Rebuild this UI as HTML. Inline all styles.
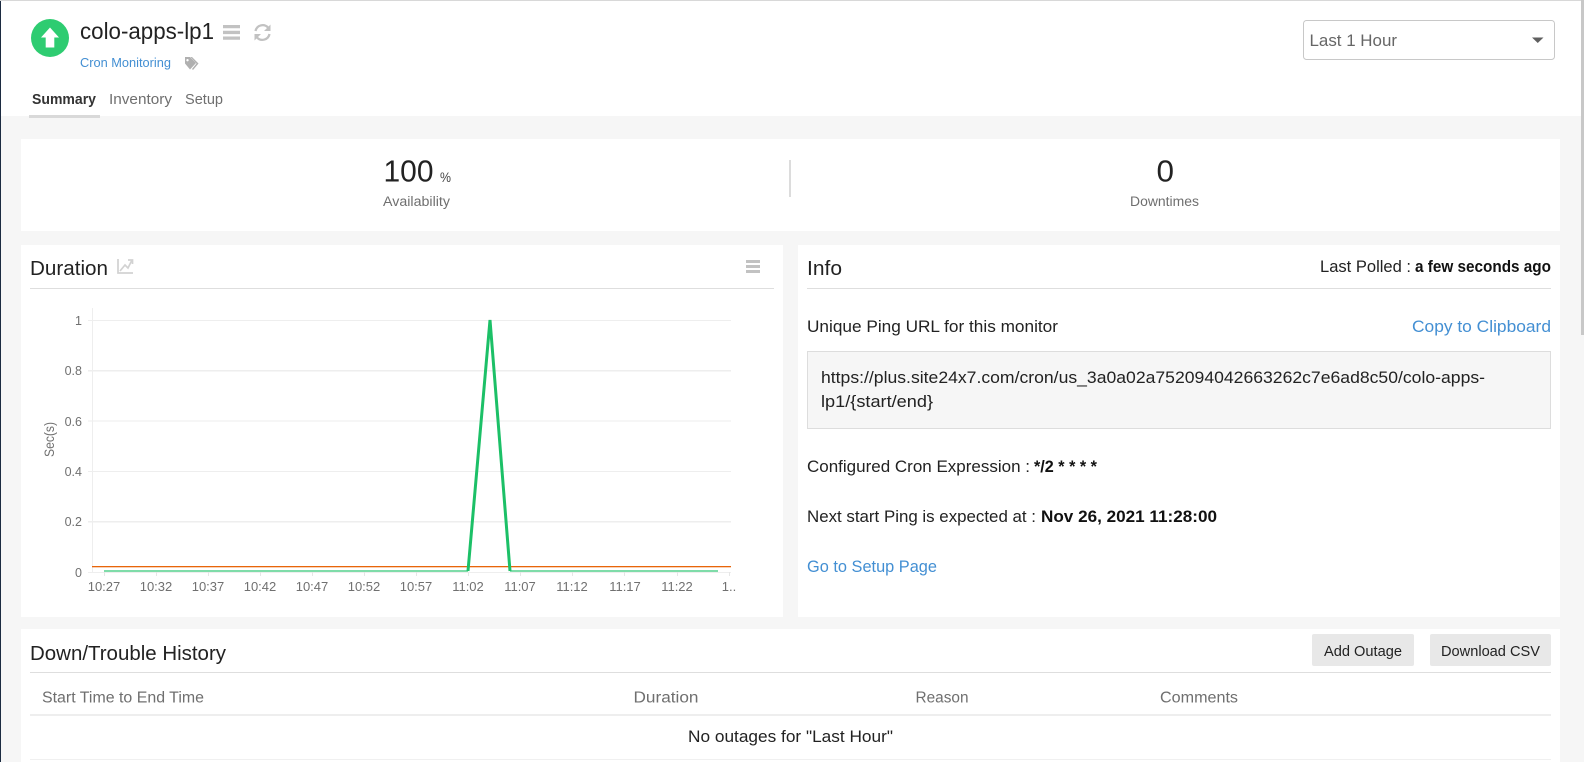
<!DOCTYPE html>
<html lang="en">
<head>
<meta charset="utf-8">
<title>colo-apps-lp1</title>
<style>
html,body{margin:0;padding:0;width:1584px;height:762px;overflow:hidden;background:#f6f6f6}
svg{display:block;position:absolute;left:0;top:0}
text{font-family:"Liberation Sans",sans-serif}
.d{fill:#222}
.g{fill:#6f6f6f}
.b{fill:#438fd3}
.a{fill:#707070;font-size:12.500px}
.x{fill:#707070;font-size:13px}
</style>
</head>
<body>
<svg width="1584" height="762" viewBox="0 0 1584 762" xmlns="http://www.w3.org/2000/svg">
  <!-- page chrome -->
  <rect x="0" y="0" width="1584" height="762" fill="#f6f6f6"/>
  <rect x="1" y="0" width="1580" height="116" fill="#fff"/>
  <rect x="0" y="0" width="1584" height="1" fill="#d8d8d8"/>
  <rect x="0" y="1" width="1" height="761" fill="#1c2b41"/>
  <rect x="1581" y="0" width="3" height="335" fill="#c8c8c8"/>

  <!-- header -->
  <circle cx="50" cy="38" r="19" fill="#2ecc71"/>
  <path d="M50 27.500L59 37.500H54.300V47.500H45.700V37.500H41Z" fill="#fff"/>
  <text x="80" y="39" font-size="23" class="d" textLength="134" lengthAdjust="spacingAndGlyphs">colo-apps-lp1</text>
  <path d="M223 25h17v3.300h-17zM223 30.800h17v3.300h-17zM223 36.500h17v3.300h-17z" fill="#c2c2c2"/>
  <g fill="none" stroke="#c2c2c2" stroke-width="2.300">
    <path d="M255.500 31A7.300 7.300 0 0 1 268 27.500"/>
    <path d="M269.500 34A7.300 7.300 0 0 1 257 37.500"/>
  </g>
  <path d="M270.500 24.500V31H264ZM254.500 40.500V34H261Z" fill="#c2c2c2"/>
  <text x="80" y="67" font-size="12.500" class="b" textLength="91" lengthAdjust="spacingAndGlyphs">Cron Monitoring</text>
  <path fill-rule="evenodd" d="M185 57h5l6 6-6 6.500-5-6ZM187.500 59a1.200 1.200 0 1 0 .01 0Z" fill="#b0b0b0"/>
  <path d="M192 57l6.500 6.500-5.500 6.500-1-1 4.500-5.500-6-6.500Z" fill="#b0b0b0"/>
  <text x="32" y="104" font-size="14.500" font-weight="700" fill="#333" textLength="64" lengthAdjust="spacingAndGlyphs">Summary</text>
  <text x="109" y="104" font-size="14.500" class="g" textLength="63" lengthAdjust="spacingAndGlyphs">Inventory</text>
  <text x="185" y="104" font-size="14.500" class="g" textLength="38" lengthAdjust="spacingAndGlyphs">Setup</text>
  <rect x="29" y="115" width="71" height="3" fill="#d9d9d9"/>

  <rect x="1303.500" y="20.500" width="251" height="39" rx="3" fill="#fff" stroke="#c8c8c8"/>
  <text x="1309.500" y="46" font-size="16.500" fill="#666" textLength="87.500" lengthAdjust="spacingAndGlyphs">Last 1 Hour</text>
  <path d="M1532 37.500h11.500l-5.750 5.500Z" fill="#5f5f5f"/>

  <!-- summary -->
  <rect x="21" y="139" width="1539" height="92" fill="#fff"/>
  <text x="383.500" y="181.500" font-size="31" class="d" textLength="50" lengthAdjust="spacingAndGlyphs">100</text>
  <text x="440" y="182" font-size="14" fill="#444" textLength="11" lengthAdjust="spacingAndGlyphs">%</text>
  <text x="383" y="206" font-size="13.500" class="g" textLength="67" lengthAdjust="spacingAndGlyphs">Availability</text>
  <rect x="789" y="160" width="2" height="37" fill="#dcdcdc"/>
  <text x="1156.500" y="181.500" font-size="31" class="d" textLength="17.500" lengthAdjust="spacingAndGlyphs">0</text>
  <text x="1130" y="206" font-size="13.500" class="g" textLength="69" lengthAdjust="spacingAndGlyphs">Downtimes</text>

  <!-- duration panel -->
  <rect x="21" y="245" width="762" height="372" fill="#fff"/>
  <text x="30" y="275" font-size="20.500" class="d" textLength="78" lengthAdjust="spacingAndGlyphs">Duration</text>
  <g fill="none" stroke="#d2d2d2" stroke-width="1.700">
    <path d="M118 259V273H133"/>
    <path d="M120 271L125 265L128 268L132 260"/>
    <path d="M128 260H132.500V264"/>
  </g>
  <path d="M746 260h14v3h-14zM746 265h14v3h-14zM746 270h14v3h-14z" fill="#c2c2c2"/>
  <rect x="30" y="288" width="744" height="1" fill="#dedede"/>

  <!-- chart -->
  <rect x="92" y="308" width="1" height="264" fill="#eeeeee"/>
  <g fill="#eeeeee">
    <rect x="88" y="320" width="643" height="1"/>
    <rect x="88" y="370" width="643" height="1.500"/>
    <rect x="88" y="420.500" width="643" height="1"/>
    <rect x="88" y="471" width="643" height="1"/>
    <rect x="88" y="521" width="643" height="1.500"/>
    <rect x="88" y="572" width="643" height="1"/>
  </g>
  <g fill="#e6e6e6">
    <rect x="104" y="572" width="1" height="4"/><rect x="156" y="572" width="1" height="4"/>
    <rect x="208" y="572" width="1" height="4"/><rect x="260" y="572" width="1" height="4"/>
    <rect x="312" y="572" width="1" height="4"/><rect x="364" y="572" width="1" height="4"/>
    <rect x="416" y="572" width="1" height="4"/><rect x="468" y="572" width="1" height="4"/>
    <rect x="520" y="572" width="1" height="4"/><rect x="572" y="572" width="1" height="4"/>
    <rect x="624" y="572" width="1" height="4"/><rect x="677" y="572" width="1" height="4"/>
    <rect x="729" y="572" width="1" height="4"/>
  </g>
  <rect x="92" y="566" width="639" height="1.300" fill="#e8650a"/>
  <path d="M104 571H468M510 571H718" fill="none" stroke="#7fdca9" stroke-width="2"/>
  <path d="M468 571L490 320L510 571" fill="none" stroke="#1cc067" stroke-width="3"/>

  <g class="a" text-anchor="end">
    <text x="82" y="325">1</text>
    <text x="82" y="375">0.8</text>
    <text x="82" y="426">0.6</text>
    <text x="82" y="476">0.4</text>
    <text x="82" y="526">0.2</text>
    <text x="82" y="577">0</text>
  </g>
  <text transform="translate(54 457) rotate(-90)" x="0" y="0" font-size="14" fill="#707070" textLength="35" lengthAdjust="spacingAndGlyphs">Sec(s)</text>
  <g class="x" text-anchor="middle">
    <text x="104" y="591">10:27</text>
    <text x="156" y="591">10:32</text>
    <text x="208" y="591">10:37</text>
    <text x="260" y="591">10:42</text>
    <text x="312" y="591">10:47</text>
    <text x="364" y="591">10:52</text>
    <text x="416" y="591">10:57</text>
    <text x="468" y="591">11:02</text>
    <text x="520" y="591">11:07</text>
    <text x="572" y="591">11:12</text>
    <text x="625" y="591">11:17</text>
    <text x="677" y="591">11:22</text>
    <text x="729" y="591">1..</text>
  </g>

  <!-- info panel -->
  <rect x="798" y="245" width="762" height="372" fill="#fff"/>
  <text x="807" y="275" font-size="20.500" class="d" textLength="35" lengthAdjust="spacingAndGlyphs">Info</text>
  <text x="1320" y="272" font-size="16.500" class="d" textLength="91" lengthAdjust="spacingAndGlyphs">Last Polled :</text>
  <text x="1415" y="272" font-size="16.500" font-weight="700" fill="#111" textLength="136" lengthAdjust="spacingAndGlyphs">a few seconds ago</text>
  <rect x="807" y="288" width="744" height="1" fill="#dedede"/>
  <text x="807" y="332" font-size="16.500" class="d" textLength="251" lengthAdjust="spacingAndGlyphs">Unique Ping URL for this monitor</text>
  <text x="1412" y="332" font-size="16.500" class="b" textLength="139" lengthAdjust="spacingAndGlyphs">Copy to Clipboard</text>
  <rect x="807.500" y="351.500" width="743" height="77" fill="#f6f6f6" stroke="#dddddd"/>
  <text x="821" y="383" font-size="16.500" class="d" textLength="664" lengthAdjust="spacingAndGlyphs">https://plus.site24x7.com/cron/us_3a0a02a752094042663262c7e6ad8c50/colo-apps-</text>
  <text x="821" y="407" font-size="16.500" class="d" textLength="112" lengthAdjust="spacingAndGlyphs">lp1/{start/end}</text>
  <text x="807" y="472" font-size="16.500" class="d" textLength="223" lengthAdjust="spacingAndGlyphs">Configured Cron Expression :</text>
  <text x="1034" y="472" font-size="16.500" font-weight="700" fill="#111" textLength="63" lengthAdjust="spacingAndGlyphs">*/2 * * * *</text>
  <text x="807" y="522" font-size="16.500" class="d" textLength="229" lengthAdjust="spacingAndGlyphs">Next start Ping is expected at :</text>
  <text x="1041" y="522" font-size="16.500" font-weight="700" fill="#111" textLength="176" lengthAdjust="spacingAndGlyphs">Nov 26, 2021 11:28:00</text>
  <text x="807" y="572" font-size="16.500" class="b" textLength="130" lengthAdjust="spacingAndGlyphs">Go to Setup Page</text>

  <!-- history panel -->
  <rect x="21" y="629" width="1539" height="133" fill="#fff"/>
  <text x="30" y="660" font-size="20.500" class="d" textLength="196" lengthAdjust="spacingAndGlyphs">Down/Trouble History</text>
  <rect x="1312" y="634" width="102" height="32" rx="2" fill="#e8e8e8"/>
  <text x="1324" y="656" font-size="15" class="d" textLength="78" lengthAdjust="spacingAndGlyphs">Add Outage</text>
  <rect x="1430" y="634" width="121" height="32" rx="2" fill="#e8e8e8"/>
  <text x="1441" y="656" font-size="15" class="d" textLength="99" lengthAdjust="spacingAndGlyphs">Download CSV</text>
  <rect x="30" y="672" width="1521" height="1" fill="#dedede"/>
  <text x="42" y="702.500" font-size="15.500" class="g" textLength="162" lengthAdjust="spacingAndGlyphs">Start Time to End Time</text>
  <text x="633.500" y="702.500" font-size="15.500" class="g" textLength="65" lengthAdjust="spacingAndGlyphs">Duration</text>
  <text x="915.500" y="702.500" font-size="15.500" class="g" textLength="53" lengthAdjust="spacingAndGlyphs">Reason</text>
  <text x="1160" y="702.500" font-size="15.500" class="g" textLength="78" lengthAdjust="spacingAndGlyphs">Comments</text>
  <rect x="30" y="714" width="1521" height="2" fill="#eeeeee"/>
  <text x="688" y="742" font-size="16.500" class="d" textLength="205" lengthAdjust="spacingAndGlyphs">No outages for "Last Hour"</text>
  <rect x="30" y="759" width="1521" height="1" fill="#f0f0f0"/>
</svg>
</body>
</html>
